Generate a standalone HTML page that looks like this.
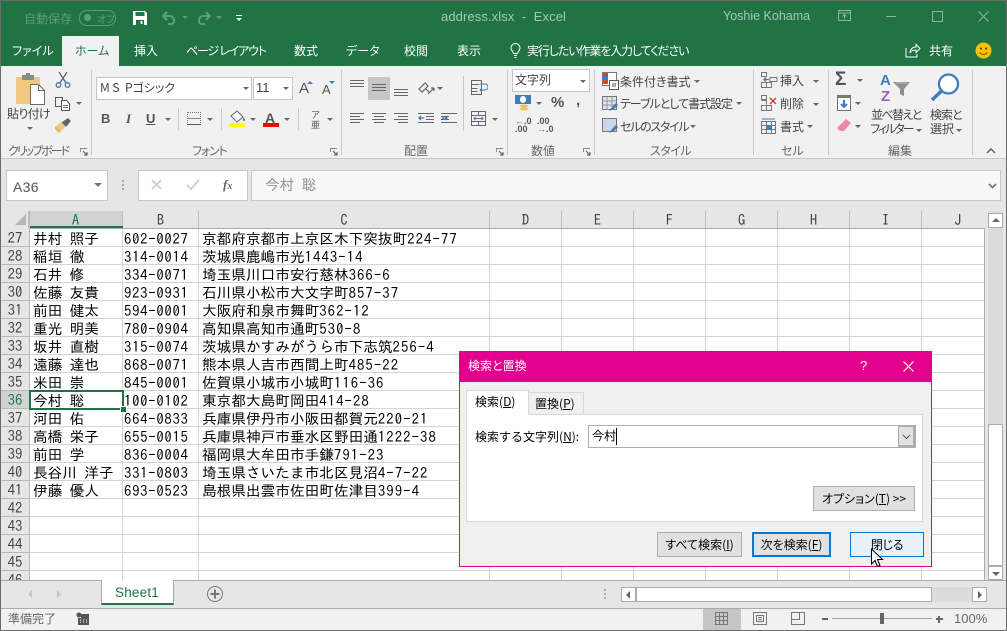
<!DOCTYPE html>
<html lang="ja"><head><meta charset="utf-8"><title>address.xlsx - Excel</title>
<style>
html,body{margin:0;padding:0;width:1007px;height:631px;overflow:hidden;background:#e6e6e6}
body{position:relative;font-family:"Liberation Sans","Noto Sans CJK JP",sans-serif;font-size:12px;color:#444}
.a,.t,svg.i{position:absolute}
.t{white-space:nowrap;line-height:16px;height:16px}
.j{font-family:"Noto Sans CJK JP",sans-serif;font-feature-settings:"palt"}
.w{color:#fff}
.lab{color:#666}
.dd{position:absolute;width:0;height:0;border-left:3px solid transparent;border-right:3px solid transparent;border-top:3px solid #666}
.sep{position:absolute;width:1px;background:#c6c6c6}
.c{position:absolute;font-family:"IPAGothic","Noto Sans CJK JP",sans-serif;font-size:14.67px;line-height:18px;height:18px;color:#000;white-space:nowrap}
.c b{font-weight:normal;letter-spacing:1.1px}
.z{letter-spacing:.75px}
.rh{position:absolute;left:1px;width:28px;height:18px;line-height:18px;text-align:center;font-family:"IPAGothic",sans-serif;font-size:14.67px;color:#444;background:#e6e6e6;border-bottom:1px solid #b8b8b8;box-sizing:border-box}
.ch{position:absolute;top:211px;height:17px;line-height:18px;text-align:center;font-family:"IPAGothic",sans-serif;font-size:14.67px;color:#444;background:#e6e6e6;border-right:1px solid #bfbfbf;box-sizing:border-box}
.btn{position:absolute;box-sizing:border-box;border:1px solid #adadad;background:#e1e1e1;color:#000;text-align:center;font-family:"Noto Sans CJK JP",sans-serif;font-size:12px;font-feature-settings:"palt"}
u{text-decoration:underline}
.dlg{font-family:"Noto Sans CJK JP",sans-serif;color:#000}
</style></head><body>

<!-- title bar -->
<div class="a" style="left:0;top:0;width:1007px;height:66px;background:#217346"></div>
<div class="a" style="left:0;top:0;width:1007px;height:1px;background:#6b6b6b"></div>
<div class="t j" style="left:24px;top:11px;color:#5f9c7c">自動保存</div>
<div class="a" style="left:79px;top:10px;width:37px;height:16px;box-sizing:border-box;border:1px solid #5f9c7c;border-radius:8px"></div>
<div class="a" style="left:84px;top:14px;width:7px;height:7px;border-radius:50%;background:#5f9c7c"></div>
<div class="t j" style="left:97px;top:11px;font-size:10px;color:#5f9c7c">オフ</div>
<svg class="i" style="left:132px;top:10px" width="16" height="16" viewBox="0 0 16 16"><path d="M1 1h12l2 2v12H1z" fill="#fff"/><rect x="3.500" y="2" width="9" height="4" fill="#217346"/><rect x="4" y="10" width="8" height="5" fill="#217346"/><rect x="8.500" y="11" width="2" height="3" fill="#fff"/></svg>
<svg class="i" style="left:161px;top:10px" width="16" height="16" viewBox="0 0 16 16" fill="none" stroke="#5f9c7c" stroke-width="2"><path d="M6 2 2 6l4 4M2 6h7a4 4 0 0 1 4 4v1a3 3 0 0 1-3 3H7"/></svg>
<div class="dd" style="left:182px;top:16px;border-top-color:#5f9c7c"></div>
<svg class="i" style="left:196px;top:10px" width="16" height="16" viewBox="0 0 16 16" fill="none" stroke="#5f9c7c" stroke-width="2"><path d="m10 2 4 4-4 4M14 6H7a4 4 0 0 0-4 4v1a3 3 0 0 0 3 3h3"/></svg>
<div class="dd" style="left:216px;top:16px;border-top-color:#5f9c7c"></div>
<div class="a" style="left:236px;top:15px;width:6px;height:1px;background:#fff"></div>
<div class="dd" style="left:236px;top:18px;border-top-color:#fff"></div>
<div class="t" style="left:441px;top:9px;font-size:13px;color:#a6c7b5;letter-spacing:.1px">address.xlsx&nbsp; -&nbsp; Excel</div>
<div class="t" style="left:723px;top:8px;font-size:12.500px;color:#a6c7b5">Yoshie Kohama</div>
<svg class="i" style="left:838px;top:10px" width="14" height="12" viewBox="0 0 14 12" fill="none" stroke="#8db8a0"><path d="M.5.500h12v10H.5zM.5 3h12M6.500 9V5M4.500 6.500l2-2 2 2"/></svg>
<div class="a" style="left:886px;top:16px;width:10px;height:1px;background:#8db8a0"></div>
<div class="a" style="left:932px;top:11px;width:9px;height:9px;border:1px solid #8db8a0"></div>
<svg class="i" style="left:978px;top:11px" width="11" height="11" viewBox="0 0 11 11" stroke="#8db8a0"><path d="M.5.500l10 10M10.500.500l-10 10"/></svg>

<!-- tabs -->
<div class="a" style="left:62px;top:36px;width:57px;height:30px;background:#f1f1f1"></div>
<div class="t j w" style="left:12px;top:43px">ファイル</div>
<div class="t j" style="left:75px;top:43px;color:#217346">ホーム</div>
<div class="t j w" style="left:134px;top:43px">挿入</div>
<div class="t j w" style="left:186px;top:43px;letter-spacing:-1.200px">ページ レイアウト</div>
<div class="t j w" style="left:294px;top:43px">数式</div>
<div class="t j w" style="left:346px;top:43px">データ</div>
<div class="t j w" style="left:404px;top:43px">校閲</div>
<div class="t j w" style="left:457px;top:43px">表示</div>
<svg class="i" style="left:510px;top:43px" width="11" height="15" viewBox="0 0 11 15" fill="none" stroke="#fff"><path d="M3.500 10.500C3 8 1 7.500 1 5a4.500 4.500 0 0 1 9 0c0 2.500-2 3-2.500 5.500zM4 12.500h3M4.500 14.500h2"/></svg>
<div class="t j w" style="left:527px;top:43px;letter-spacing:-1.100px">実行したい作業を入力してください</div>
<svg class="i" style="left:905px;top:43px" width="16" height="15" viewBox="0 0 16 15" fill="none" stroke="#fff"><path d="M1 5v9h11v-3M5 10c0-4 3-6 6-6V1.500l4 4-4 4V7c-3 0-5 1-6 3z"/></svg>
<div class="t j w" style="left:929px;top:43px">共有</div>
<svg class="i" style="left:975px;top:42px" width="17" height="17" viewBox="0 0 17 17"><circle cx="8.500" cy="8.500" r="8" fill="#fcc000"/><circle cx="6" cy="6.500" r="1.100" fill="#5a4a00"/><circle cx="11" cy="6.500" r="1.100" fill="#5a4a00"/><path d="M4.500 10.500c2 2.500 6 2.500 8 0" fill="none" stroke="#5a4a00"/></svg>

<!-- ribbon -->
<div class="a" style="left:1px;top:66px;width:1005px;height:92px;background:#f1f1f1;border-bottom:1px solid #c6c6c6"></div>
<div class="sep" style="left:91px;top:70px;height:85px"></div>
<div class="sep" style="left:341px;top:70px;height:85px"></div>
<div class="sep" style="left:507px;top:70px;height:85px"></div>
<div class="sep" style="left:594px;top:70px;height:85px"></div>
<div class="sep" style="left:753px;top:70px;height:85px"></div>
<div class="sep" style="left:828px;top:70px;height:85px"></div>
<div class="sep" style="left:972px;top:70px;height:85px"></div>

<!-- clipboard -->
<svg class="i" style="left:16px;top:73px" width="29" height="32" viewBox="0 0 29 32"><path d="M0 4h24v27H0z" fill="#f0c880"/><rect x="6" y="2" width="12" height="5" fill="#8a8a8a"/><rect x="10" y="0" width="4" height="4" fill="#8a8a8a"/><path d="M14.500 11.500h8l6 6v14h-14z" fill="#fff" stroke="#6a6a6a"/><path d="M22.500 11.500v6h6" fill="none" stroke="#6a6a6a"/></svg>
<div class="t j" style="left:7px;top:106px;color:#444;letter-spacing:-.7px">貼り付け</div>
<div class="dd" style="left:27px;top:127px"></div>
<svg class="i" style="left:55px;top:72px" width="16" height="16" viewBox="0 0 16 16" fill="none"><path d="M4 0l7 11M12 0 5 11" stroke="#666" stroke-width="1.300"/><circle cx="3.500" cy="13" r="2.300" stroke="#3f7cbd" stroke-width="1.300"/><circle cx="12.500" cy="13" r="2.300" stroke="#3f7cbd" stroke-width="1.300"/></svg>
<svg class="i" style="left:55px;top:97px" width="16" height="14" viewBox="0 0 16 14" fill="none" stroke="#555"><path d="M.5.500h7v9h-7z"/><path d="M6.500 3.500h5l3 3v7h-8z" fill="#fff"/><path d="M8 8.500h5M8 10.500h5" stroke="#3f7cbd"/></svg>
<div class="dd" style="left:76px;top:102px"></div>
<svg class="i" style="left:55px;top:118px" width="17" height="16" viewBox="0 0 17 16"><path d="M1 8 6 13 10 9 6 4z" fill="#f0c880"/><path d="M1 8l5 5-2 2-5-5z" fill="#e8b560"/><path d="M9 7 6.500 4.500 13 0l3 3-5 6z" fill="#666"/></svg>
<div class="t j lab" style="left:8px;top:143px;letter-spacing:-2px">クリップボード</div>
<svg class="i" style="left:80px;top:148px" width="8" height="8" viewBox="0 0 8 8" fill="none" stroke="#888"><path d="M.5 4V.5H7"/><path d="M3 3l3.500 3.500M7 4v3H4" stroke="#555"/></svg>

<!-- font -->
<div class="a" style="left:96px;top:77px;width:156px;height:23px;box-sizing:border-box;background:#fff;border:1px solid #c6c6c6"></div>
<div class="a" style="left:253px;top:77px;width:40px;height:23px;box-sizing:border-box;background:#fff;border:1px solid #c6c6c6"></div>
<div class="t j" style="left:100px;top:80px;color:#444;">M S&nbsp; Pゴシック</div>
<div class="dd" style="left:243px;top:87px"></div>
<div class="t" style="left:256px;top:80px;font-size:13px">11</div>
<div class="dd" style="left:283px;top:87px"></div>
<div class="t" style="left:299px;top:81px;font-size:15px;color:#555">A</div>
<div class="a" style="left:307px;top:81px;border:3px solid transparent;border-top:0;border-bottom:3px solid #3f7cbd"></div>
<div class="t" style="left:322px;top:82px;font-size:13px;color:#555">A</div>
<div class="a" style="left:329px;top:81px;border:3px solid transparent;border-bottom:0;border-top:3px solid #3f7cbd"></div>
<div class="t" style="left:101px;top:111px;font-weight:bold;font-size:13px;color:#555">B</div>
<div class="t" style="left:126px;top:111px;font-style:italic;font-family:'Liberation Serif',serif;font-weight:bold;font-size:13px;color:#555">I</div>
<div class="t" style="left:146px;top:111px;font-weight:bold;font-size:13px;color:#555;text-decoration:underline">U</div>
<div class="dd" style="left:165px;top:118px"></div>
<div class="sep" style="left:178px;top:108px;height:22px"></div>
<div class="a" style="left:187px;top:112px;width:12px;height:11px;border:1px dotted #777;background:linear-gradient(#888,#888) 0 5px/100% 1px no-repeat;border-bottom:1px solid #555"></div>
<div class="dd" style="left:207px;top:118px"></div>
<div class="sep" style="left:221px;top:108px;height:22px"></div>
<svg class="i" style="left:229px;top:110px" width="17" height="17" viewBox="0 0 17 17"><path d="M2 6 8 1l6 6-6 5z" fill="#fff" stroke="#666"/><path d="M14 7c2 2 2.500 3 1.500 4-1 .500-2-1-1.500-4z" fill="#3f7cbd"/></svg>
<div class="a" style="left:229px;top:123px;width:16px;height:4px;background:#ffff00"></div>
<div class="dd" style="left:250px;top:118px"></div>
<div class="t" style="left:265px;top:110px;font-weight:bold;font-size:14px;color:#555">A</div>
<div class="a" style="left:263px;top:123px;width:16px;height:4px;background:#ff0000"></div>
<div class="dd" style="left:284px;top:118px"></div>
<div class="sep" style="left:298px;top:108px;height:22px"></div>
<div class="t j" style="left:309px;top:110px;font-size:9px;line-height:10px;color:#555;width:13px;height:20px;text-align:center">ア<br>亜</div>
<div class="dd" style="left:327px;top:118px"></div>
<div class="t j lab" style="left:192px;top:143px;letter-spacing:-1.200px">フォント</div>
<svg class="i" style="left:330px;top:148px" width="8" height="8" viewBox="0 0 8 8" fill="none" stroke="#888"><path d="M.5 4V.5H7"/><path d="M3 3l3.500 3.500M7 4v3H4" stroke="#555"/></svg>

<!-- alignment -->
<div class="a" style="left:368px;top:77px;width:22px;height:23px;background:#c6c6c6"></div>
<svg class="i" style="left:349px;top:78px" width="62" height="20" viewBox="0 0 62 20" stroke="#666" fill="none"><path d="M1 2.500h14M1 5.500h14M1 8.500h14M23 6.500h14M23 9.500h14M23 12.500h14M45 11.500h14M45 14.500h14M45 17.500h14"/></svg>
<svg class="i" style="left:418px;top:80px" width="17" height="16" viewBox="0 0 17 16" fill="none" stroke="#666" stroke-width="1.200"><path d="M1 9 7 3l3 3-6 6zM8 9l3 3M10 14l6-6M16 8v3M16 8h-3"/></svg>
<div class="dd" style="left:437px;top:87px"></div>
<svg class="i" style="left:349px;top:112px" width="110" height="14" viewBox="0 0 110 14" stroke="#666" fill="none"><path d="M1 1.500h14M1 4.500h10M1 7.500h14M1 10.500h10M23 1.500h14M25 4.500h10M23 7.500h14M25 10.500h10M45 1.500h14M49 4.500h10M45 7.500h14M49 10.500h10M69 1.500h16M77 4.500h8M77 7.500h8M69 10.500h16M92 1.500h16M92 4.500h8M92 7.500h8M92 10.500h16"/><path d="M75 6h-5M72 4 70 6l2 2M93 6h5M96 4l2 2-2 2" stroke="#3f7cbd" stroke-width="1.300"/></svg>
<div class="sep" style="left:463px;top:76px;height:55px"></div>
<svg class="i" style="left:471px;top:80px" width="17" height="16" viewBox="0 0 17 16" fill="none" stroke="#666"><path d="M.5.500h10v14H.5zM.5 4.500h8M.5 8.500h6M.5 11.500h6"/><path d="M9 4h5a2 2 0 0 1 0 6H9M11 8l-2 2 2 2" stroke="#3f7cbd"/></svg>
<svg class="i" style="left:471px;top:111px" width="16" height="16" viewBox="0 0 16 16" fill="none" stroke="#666"><path d="M.5.500h14v14H.5zM.5 4.500h14M.5 10.500h14M7.500.500v4M7.500 10.500v4"/><path d="M3 7.500h9M4.500 6l-1.500 1.500L4.500 9M10.500 6 12 7.500 10.500 9" stroke="#3f7cbd"/></svg>
<div class="dd" style="left:492px;top:118px"></div>
<div class="t j lab" style="left:404px;top:143px">配置</div>
<svg class="i" style="left:496px;top:148px" width="8" height="8" viewBox="0 0 8 8" fill="none" stroke="#888"><path d="M.5 4V.5H7"/><path d="M3 3l3.500 3.500M7 4v3H4" stroke="#555"/></svg>

<!-- number -->
<div class="a" style="left:512px;top:69px;width:78px;height:23px;box-sizing:border-box;background:#fff;border:1px solid #c6c6c6"></div>
<div class="t j" style="left:515px;top:72px">文字列</div>
<div class="dd" style="left:580px;top:80px"></div>
<svg class="i" style="left:515px;top:95px" width="17" height="17" viewBox="0 0 17 17"><rect x="0" y="0" width="16" height="9" fill="#3f7cbd"/><ellipse cx="8" cy="4.500" rx="3" ry="3.500" fill="#fff"/><ellipse cx="9" cy="11" rx="4.500" ry="1.500" fill="#f0c060"/><ellipse cx="9" cy="14" rx="4.500" ry="1.500" fill="#f0c060"/></svg>
<div class="dd" style="left:536px;top:102px"></div>
<div class="t" style="left:551px;top:95px;font-size:15px;font-weight:bold;color:#555">%</div>
<div class="t" style="left:576px;top:93px;font-size:15px;font-weight:bold;color:#555">,</div>
<div class="t" style="left:515px;top:117px;font-size:9px;line-height:8px;height:18px;color:#555;font-weight:bold"><span style="color:#3f7cbd">←</span>.0<br>.00</div>
<div class="t" style="left:537px;top:117px;font-size:9px;line-height:8px;height:18px;color:#555;font-weight:bold">.00<br><span style="color:#3f7cbd">→</span>.0</div>
<div class="t j lab" style="left:531px;top:143px">数値</div>
<svg class="i" style="left:583px;top:148px" width="8" height="8" viewBox="0 0 8 8" fill="none" stroke="#888"><path d="M.5 4V.5H7"/><path d="M3 3l3.500 3.500M7 4v3H4" stroke="#555"/></svg>

<!-- styles -->
<svg class="i" style="left:602px;top:72px" width="17" height="18" viewBox="0 0 17 18"><rect x=".5" y=".5" width="14" height="13" fill="#fff" stroke="#777"/><rect x="1" y="1" width="5" height="3" fill="#d24726"/><rect x="1" y="4" width="5" height="4" fill="#3f7cbd"/><rect x="1" y="8" width="5" height="4" fill="#d24726"/><rect x="7.500" y="8.500" width="9" height="9" fill="#fff" stroke="#555"/><path d="M10 12h4M10 14h4" stroke="#555"/></svg>
<svg class="i" style="left:602px;top:96px" width="17" height="17" viewBox="0 0 17 17"><rect x=".5" y=".5" width="14" height="13" fill="#dde4ee" stroke="#777"/><path d="M5 1v13M10 1v13M1 5h13M1 9h13" stroke="#999"/><path d="M7 15l3-4 4-4 2 2-4 4z" fill="#3f7cbd"/></svg>
<svg class="i" style="left:602px;top:118px" width="17" height="17" viewBox="0 0 17 17"><rect x=".5" y=".5" width="14" height="13" fill="#cbd7e6" stroke="#777"/><path d="M7 15l3-4 4-4 2 2-4 4z" fill="#3f7cbd"/></svg>
<div class="t j" style="left:620px;top:74px">条件付き書式</div><div class="dd" style="left:694px;top:80px"></div>
<div class="t j" style="left:620px;top:96px;letter-spacing:-1px">テーブルとして書式設定</div><div class="dd" style="left:736px;top:102px"></div>
<div class="t j" style="left:620px;top:119px;letter-spacing:-1.300px">セルのスタイル</div><div class="dd" style="left:690px;top:125px"></div>
<div class="t j lab" style="left:650px;top:143px;letter-spacing:-.5px">スタイル</div>

<!-- cells -->
<svg class="i" style="left:761px;top:72px" width="17" height="16" viewBox="0 0 17 16" fill="none" stroke="#777"><path d="M.5.500h5v4h-5zM.5 10.500h10v5H.5zM5.500 10.500v5M9 5.500h7v4H9z"/><path d="M8 7.500H3M5 5.500l-2 2 2 2" stroke="#3f7cbd" stroke-width="1.300"/></svg>
<svg class="i" style="left:761px;top:95px" width="17" height="16" viewBox="0 0 17 16" fill="none" stroke="#777"><path d="M.5.500h5v4h-5zM.5 10.500h10v5H.5zM5.500 10.500v5M.5 5.500h5v4"/><path d="m9 3 6 6M15 3 9 9" stroke="#d24726" stroke-width="1.500"/></svg>
<svg class="i" style="left:761px;top:118px" width="16" height="16" viewBox="0 0 16 16" fill="none" stroke="#777"><path d="M.5 3.500h14v12H.5zM.5 7.500h14M.5 11.500h14M5.500 3.500v12M10.500 3.500v12"/><rect x="5" y="7" width="6" height="5" fill="#3f7cbd" stroke="none"/><path d="M1 1h13" stroke="#3f7cbd"/></svg>
<div class="t j" style="left:780px;top:73px">挿入</div><div class="dd" style="left:813px;top:80px"></div>
<div class="t j" style="left:780px;top:96px">削除</div><div class="dd" style="left:813px;top:103px"></div>
<div class="t j" style="left:780px;top:119px">書式</div><div class="dd" style="left:807px;top:125px"></div>
<div class="t j lab" style="left:781px;top:143px">セル</div>

<!-- editing -->
<div class="t" style="left:835px;top:72px;font-size:19px;line-height:16px;font-weight:bold;color:#555">Σ</div>
<div class="dd" style="left:857px;top:79px"></div>
<svg class="i" style="left:837px;top:95px" width="14" height="16" viewBox="0 0 14 16"><rect x=".5" y=".5" width="13" height="15" fill="#fff" stroke="#777"/><rect x="1" y="1" width="12" height="2" fill="#777"/><path d="M7 5v7M4 9l3 3 3-3" fill="none" stroke="#3f7cbd" stroke-width="2"/></svg>
<div class="dd" style="left:855px;top:102px"></div>
<svg class="i" style="left:837px;top:119px" width="14" height="13" viewBox="0 0 14 13"><path d="M9 0l5 4-7 8H3L0 9z" fill="#ea8a9d"/></svg>
<div class="dd" style="left:855px;top:125px"></div>
<div class="t" style="left:880px;top:73px;font-size:15px;font-weight:bold;color:#3f7cbd">A</div>
<div class="t" style="left:881px;top:89px;font-size:15px;font-weight:bold;color:#9a5fc0">Z</div>
<svg class="i" style="left:893px;top:82px" width="18" height="15" viewBox="0 0 18 15"><path d="M0 0h17L11 7v7l-4-2V7z" fill="#8f8f8f"/><path d="M3 1h11" stroke="#bbb"/></svg>
<div class="t j" style="left:871px;top:107px;letter-spacing:-1.600px">並べ替えと</div>
<div class="t j" style="left:870px;top:121px;letter-spacing:-2px">フィルター</div><div class="dd" style="left:916px;top:129px"></div>
<svg class="i" style="left:930px;top:73px" width="30" height="29" viewBox="0 0 30 29" fill="none"><circle cx="18.500" cy="11" r="9.500" stroke="#3f7cbd" stroke-width="2.300" fill="#fff"/><path d="M11.500 18 2 27" stroke="#3f7cbd" stroke-width="3.500"/></svg>
<div class="t j" style="left:930px;top:107px;letter-spacing:-1px">検索と</div>
<div class="t j" style="left:930px;top:121px">選択</div><div class="dd" style="left:956px;top:129px"></div>
<div class="t j lab" style="left:888px;top:143px">編集</div>
<svg class="i" style="left:986px;top:148px" width="10" height="6" viewBox="0 0 10 6" fill="none" stroke="#666" stroke-width="1.500"><path d="m1 5 4-4 4 4"/></svg>

<!-- formula bar -->
<div class="a" style="left:6px;top:170px;width:102px;height:31px;box-sizing:border-box;background:#fff;border:1px solid #c6c6c6"></div>
<div class="t" style="left:13px;top:179px;font-size:14px;color:#555;letter-spacing:.3px">A36</div>
<div class="dd" style="left:94px;top:183px;border-left-width:4px;border-right-width:4px;border-top-width:4px;border-top-color:#777"></div>
<div class="a" style="left:122px;top:180px;width:2px;height:2px;background:#aaa;box-shadow:0 4px #aaa,0 8px #aaa"></div>
<div class="a" style="left:138px;top:170px;width:110px;height:31px;box-sizing:border-box;background:#fff;border:1px solid #c6c6c6"></div>
<svg class="i" style="left:151px;top:179px" width="12" height="12" viewBox="0 0 12 12" stroke="#ccc" stroke-width="1.600"><path d="m1 1 9 9M10 1l-9 9"/></svg>
<svg class="i" style="left:186px;top:179px" width="14" height="12" viewBox="0 0 14 12" fill="none" stroke="#ccc" stroke-width="1.800"><path d="m1 6 4 4 8-9"/></svg>
<div class="t" style="left:223px;top:177px;font-family:'Liberation Serif',serif;font-style:italic;font-weight:bold;font-size:13px;color:#666">f<span style="font-size:10px">x</span></div>
<div class="a" style="left:251px;top:170px;width:750px;height:31px;box-sizing:border-box;background:#f8f8f8;border:1px solid #c6c6c6"></div>
<div class="t" style="left:265px;top:177px;font-family:'IPAGothic',sans-serif;font-size:14.67px;color:#909090">今村 聡</div>
<svg class="i" style="left:988px;top:183px" width="9" height="6" viewBox="0 0 9 6" fill="none" stroke="#777" stroke-width="1.800"><path d="m1 1 3.500 3.500L8 1"/></svg>

<!-- sheet -->
<div class="a" style="left:29px;top:228px;width:956px;height:352px;background:#fff"></div>
<svg class="i" style="left:29px;top:228px" width="956" height="352" viewBox="0 0 956 352" stroke="#d4d4d4" fill="none" shape-rendering="crispEdges"><path d="M0 18.500h956M0 36.500h956M0 54.500h956M0 72.500h956M0 90.500h956M0 108.500h956M0 126.500h956M0 144.500h956M0 162.500h956M0 180.500h956M0 198.500h956M0 216.500h956M0 234.500h956M0 252.500h956M0 270.500h956M0 288.500h956M0 306.500h956M0 324.500h956M0 342.500h956M93.500 0v352M169.500 0v352M460.500 0v352M532.500 0v352M604.500 0v352M676.500 0v352M748.500 0v352M820.500 0v352M892.500 0v352"/></svg>
<div class="a" style="left:1px;top:211px;width:28px;height:17px;background:#e6e6e6;border-right:1px solid #bfbfbf;box-sizing:border-box"></div>
<div class="a" style="left:15px;top:214px;width:0;height:0;border-bottom:11px solid #b5b5b5;border-left:11px solid transparent"></div>
<div class="ch" style="left:29px;width:94px;background:#d2d2d2;color:#217346">A</div>
<div class="a" style="left:29px;top:226px;width:94px;height:2px;background:#217346"></div>
<div class="ch" style="left:123px;width:76px">B</div>
<div class="ch" style="left:199px;width:291px">C</div>
<div class="ch" style="left:490px;width:72px">D</div>
<div class="ch" style="left:562px;width:72px">E</div>
<div class="ch" style="left:634px;width:72px">F</div>
<div class="ch" style="left:706px;width:72px">G</div>
<div class="ch" style="left:778px;width:72px">H</div>
<div class="ch" style="left:850px;width:72px">I</div>
<div class="ch" style="left:922px;width:63px;border-right:0;text-indent:9px">J</div>
<div class="a" style="left:29px;top:228px;width:956px;height:1px;background:#ababab"></div>
<div class="a" style="left:29px;top:211px;width:0;height:369px;border-left:1px solid #b8b8b8"></div>
<div class="a" style="left:984px;top:228px;width:1px;height:352px;background:#ababab"></div>

<div class="rh" style="top:229px">27</div><div class="rh" style="top:247px">28</div><div class="rh" style="top:265px">29</div><div class="rh" style="top:283px">30</div><div class="rh" style="top:301px">31</div><div class="rh" style="top:319px">32</div><div class="rh" style="top:337px">33</div><div class="rh" style="top:355px">34</div><div class="rh" style="top:373px">35</div><div class="rh" style="top:391px;background:#d2d2d2;color:#217346">36</div><div class="rh" style="top:409px">37</div><div class="rh" style="top:427px">38</div><div class="rh" style="top:445px">39</div><div class="rh" style="top:463px">40</div><div class="rh" style="top:481px">41</div><div class="rh" style="top:499px">42</div><div class="rh" style="top:517px">43</div><div class="rh" style="top:535px">44</div><div class="rh" style="top:553px">45</div><div class="rh" style="top:571px;height:9px;overflow:hidden;border:0">46</div>

<div class="c" style="left:33px;top:230px">井村 照子</div><div class="c z" style="left:124px;top:230px">602-0027</div><div class="c" style="left:202px;top:230px">京都府京都市上京区木下突抜町<b>224-77</b></div>
<div class="c" style="left:33px;top:248px">稲垣 徹</div><div class="c z" style="left:124px;top:248px">314-0014</div><div class="c" style="left:202px;top:248px">茨城県鹿嶋市光<b>1443-14</b></div>
<div class="c" style="left:33px;top:266px">石井 修</div><div class="c z" style="left:124px;top:266px">334-0071</div><div class="c" style="left:202px;top:266px">埼玉県川口市安行慈林<b>366-6</b></div>
<div class="c" style="left:33px;top:284px">佐藤 友貴</div><div class="c z" style="left:124px;top:284px">923-0931</div><div class="c" style="left:202px;top:284px">石川県小松市大文字町<b>857-37</b></div>
<div class="c" style="left:33px;top:302px">前田 健太</div><div class="c z" style="left:124px;top:302px">594-0001</div><div class="c" style="left:202px;top:302px">大阪府和泉市舞町<b>362-12</b></div>
<div class="c" style="left:33px;top:320px">重光 明美</div><div class="c z" style="left:124px;top:320px">780-0904</div><div class="c" style="left:202px;top:320px">高知県高知市通町<b>530-8</b></div>
<div class="c" style="left:33px;top:338px">坂井 直樹</div><div class="c z" style="left:124px;top:338px">315-0074</div><div class="c" style="left:202px;top:338px">茨城県かすみがうら市下志筑<b>256-4</b></div>
<div class="c" style="left:33px;top:356px">遠藤 達也</div><div class="c z" style="left:124px;top:356px">868-0071</div><div class="c" style="left:202px;top:356px">熊本県人吉市西間上町<b>485-22</b></div>
<div class="c" style="left:33px;top:374px">米田 崇</div><div class="c z" style="left:124px;top:374px">845-0001</div><div class="c" style="left:202px;top:374px">佐賀県小城市小城町<b>116-36</b></div>
<div class="c" style="left:33px;top:392px">今村 聡</div><div class="c z" style="left:124px;top:392px">100-0102</div><div class="c" style="left:202px;top:392px">東京都大島町岡田<b>414-28</b></div>
<div class="c" style="left:33px;top:410px">河田 佑</div><div class="c z" style="left:124px;top:410px">664-0833</div><div class="c" style="left:202px;top:410px">兵庫県伊丹市小阪田都賀元<b>220-21</b></div>
<div class="c" style="left:33px;top:428px">高橋 栄子</div><div class="c z" style="left:124px;top:428px">655-0015</div><div class="c" style="left:202px;top:428px">兵庫県神戸市垂水区野田通<b>1222-38</b></div>
<div class="c" style="left:33px;top:446px">前田 学</div><div class="c z" style="left:124px;top:446px">836-0004</div><div class="c" style="left:202px;top:446px">福岡県大牟田市手鎌<b>791-23</b></div>
<div class="c" style="left:33px;top:464px">長谷川 洋子</div><div class="c z" style="left:124px;top:464px">331-0803</div><div class="c" style="left:202px;top:464px">埼玉県さいたま市北区見沼<b>4-7-22</b></div>
<div class="c" style="left:33px;top:482px">伊藤 優人</div><div class="c z" style="left:124px;top:482px">693-0523</div><div class="c" style="left:202px;top:482px">島根県出雲市佐田町佐津目<b>399-4</b></div>

<div class="a" style="left:29px;top:390px;width:95px;height:20px;box-sizing:border-box;border:2px solid #217346"></div>
<div class="a" style="left:120px;top:406px;width:5px;height:5px;background:#217346;border:1px solid #fff"></div>

<!-- v scrollbar -->
<div class="a" style="left:988px;top:211px;width:15px;height:369px;background:#dbdbdb"></div>
<div class="a" style="left:988px;top:213px;width:15px;height:15px;box-sizing:border-box;background:#fff;border:1px solid #ababab"></div>
<div class="a" style="left:992px;top:218px;border:4px solid transparent;border-top:0;border-bottom:4px solid #666"></div>
<div class="a" style="left:988px;top:424px;width:15px;height:142px;box-sizing:border-box;background:#fff;border:1px solid #ababab"></div>
<div class="a" style="left:988px;top:566px;width:15px;height:14px;box-sizing:border-box;background:#fff;border:1px solid #ababab"></div>
<div class="a" style="left:992px;top:572px;border:4px solid transparent;border-bottom:0;border-top:4px solid #666"></div>

<!-- sheet tabs -->
<div class="a" style="left:1px;top:580px;width:1005px;height:28px;background:#e6e6e6;border-top:1px solid #ababab;box-sizing:border-box"></div>
<div class="a" style="left:28px;top:590px;border:4px solid transparent;border-left:0;border-right:4px solid #c4c4c4"></div>
<div class="a" style="left:57px;top:590px;border:4px solid transparent;border-right:0;border-left:4px solid #c4c4c4"></div>
<div class="a" style="left:101px;top:580px;width:73px;height:25px;box-sizing:border-box;background:#fff;border-left:1px solid #ababab;border-right:1px solid #ababab;border-bottom:2px solid #217346"></div>
<div class="t" style="left:115px;top:585px;font-size:13.500px;letter-spacing:.2px;color:#217346">Sheet1</div>
<svg class="i" style="left:206px;top:585px" width="18" height="18" viewBox="0 0 18 18" fill="none" stroke="#777"><circle cx="9" cy="9" r="7.500"/><path d="M9 4.500v9M4.500 9h9" stroke-width="2"/></svg>
<div class="a" style="left:604px;top:589px;width:2px;height:2px;background:#aaa;box-shadow:0 4px #aaa,0 8px #aaa"></div>
<div class="a" style="left:621px;top:587px;width:366px;height:15px;background:#dbdbdb"></div>
<div class="a" style="left:621px;top:587px;width:15px;height:15px;box-sizing:border-box;background:#fff;border:1px solid #ababab"></div>
<div class="a" style="left:626px;top:591px;border:4px solid transparent;border-left:0;border-right:4px solid #666"></div>
<div class="a" style="left:636px;top:587px;width:296px;height:15px;box-sizing:border-box;background:#fff;border:1px solid #ababab"></div>
<div class="a" style="left:972px;top:587px;width:15px;height:15px;box-sizing:border-box;background:#fff;border:1px solid #ababab"></div>
<div class="a" style="left:978px;top:591px;border:4px solid transparent;border-right:0;border-left:4px solid #666"></div>

<!-- status -->
<div class="a" style="left:1px;top:608px;width:1005px;height:22px;background:#f1f1f1;border-top:1px solid #ababab;box-sizing:border-box"></div>
<div class="t j lab" style="left:8px;top:611px">準備完了</div>
<svg class="i" style="left:76px;top:612px" width="14" height="14" viewBox="0 0 14 14"><circle cx="3" cy="3" r="2.500" fill="#555"/><path d="M5 2h8v11H2V6h3z" fill="#555"/><path d="M4 8h1M7 8h1M10 8h1M4 10h1M7 10h1M10 10h1" stroke="#fff"/></svg>
<div class="a" style="left:703px;top:609px;width:38px;height:21px;background:#c6c6c6"></div>
<svg class="i" style="left:715px;top:612px" width="14" height="14" viewBox="0 0 14 14" fill="none" stroke="#777"><path d="M.5.500h12v12H.5zM.5 4.500h12M.5 8.500h12M4.500.500v12M8.500.500v12"/></svg>
<svg class="i" style="left:753px;top:612px" width="15" height="14" viewBox="0 0 15 14" fill="none" stroke="#777"><path d="M.5.500h13v12H.5zM3.500 3.500h7v6h-7zM5 5.500h4M5 7.500h4"/></svg>
<svg class="i" style="left:791px;top:612px" width="15" height="14" viewBox="0 0 15 14" fill="none" stroke="#777"><path d="M.5.500h13v12H.5zM.5 7.500h8V.500"/></svg>
<div class="a" style="left:822px;top:618px;width:6px;height:2px;background:#666"></div>
<div class="a" style="left:832px;top:618px;width:100px;height:1px;background:#a0a0a0"></div>
<div class="a" style="left:880px;top:613px;width:4px;height:11px;background:#666"></div>
<div class="a" style="left:936px;top:618px;width:7px;height:2px;background:#666"></div>
<div class="a" style="left:938px;top:616px;width:2px;height:7px;background:#666"></div>
<div class="t" style="left:954px;top:611px;font-size:13px;color:#666">100%</div>

<!-- borders -->
<div class="a" style="left:0;top:0;width:1px;height:631px;background:#6b6b6b"></div>
<div class="a" style="left:1006px;top:0;width:1px;height:631px;background:#6b6b6b"></div>
<div class="a" style="left:0;top:630px;width:1007px;height:1px;background:#6b6b6b"></div>

<!-- dialog -->
<div class="a dlg" style="left:459px;top:351px;width:473px;height:216px;box-sizing:border-box;background:#f0f0f0;border:1px solid #e3008c"></div>
<div class="a" style="left:459px;top:351px;width:473px;height:31px;background:#e3008c"></div>
<div class="t j w" style="left:468px;top:358px">検索と置換</div>
<div class="t w" style="left:860px;top:358px;font-size:13px">?</div>
<svg class="i" style="left:903px;top:361px" width="11" height="11" viewBox="0 0 11 11" stroke="#fff" stroke-width="1.200"><path d="m.5.500 10 10M10.500.500l-10 10"/></svg>
<div class="a" style="left:466px;top:414px;width:457px;height:108px;box-sizing:border-box;background:#fff;border:1px solid #d9d9d9"></div>
<div class="a" style="left:528px;top:392px;width:56px;height:23px;box-sizing:border-box;background:#f0f0f0;border:1px solid #d9d9d9"></div>
<div class="a" style="left:466px;top:390px;width:63px;height:25px;box-sizing:border-box;background:#fff;border:1px solid #d9d9d9;border-bottom:0"></div>
<div class="t dlg" style="left:475px;top:394px">検索(<u>D</u>)</div>
<div class="t dlg" style="left:535px;top:396px">置換(<u>P</u>)</div>
<div class="t dlg" style="left:475px;top:429px">検索する文字列(<u>N</u>):</div>
<div class="a" style="left:588px;top:425px;width:328px;height:23px;box-sizing:border-box;background:#fff;border:1px solid #adadad"></div>
<div class="t dlg" style="left:592px;top:428px">今村</div>
<div class="a" style="left:616px;top:428px;width:1px;height:17px;background:#000"></div>
<div class="a" style="left:898px;top:426px;width:17px;height:21px;background:#e1e1e1;border-left:1px solid #adadad;box-sizing:border-box;border-right:2px solid #adadad;border-top:1px solid #adadad;border-bottom:2px solid #adadad"></div>
<svg class="i" style="left:902px;top:434px" width="9" height="6" viewBox="0 0 9 6" fill="none" stroke="#555"><path d="m1 1 3.500 3.500L8 1"/></svg>
<div class="btn" style="left:813px;top:486px;width:102px;height:25px;line-height:23px;white-space:nowrap">オプション(<u>T</u>) &gt;&gt;</div>
<div class="btn" style="left:657px;top:532px;width:85px;height:25px;line-height:23px;white-space:nowrap">すべて検索(<u>I</u>)</div>
<div class="btn" style="left:752px;top:532px;width:79px;height:25px;line-height:21px;white-space:nowrap;border:2px solid #0078d7">次を検索(<u>F</u>)</div>
<div class="btn" style="left:850px;top:532px;width:74px;height:25px;line-height:23px;background:#e5f1fb;border-color:#0078d7;letter-spacing:-.3px">閉じる</div>
<svg class="i" style="left:870px;top:548px" width="14" height="20" viewBox="0 0 14 20"><path d="M1.500 1v15l3.500-3.500 2.500 6 2.500-1-2.500-6h5z" fill="#fff" stroke="#000"/></svg>

</body></html>
